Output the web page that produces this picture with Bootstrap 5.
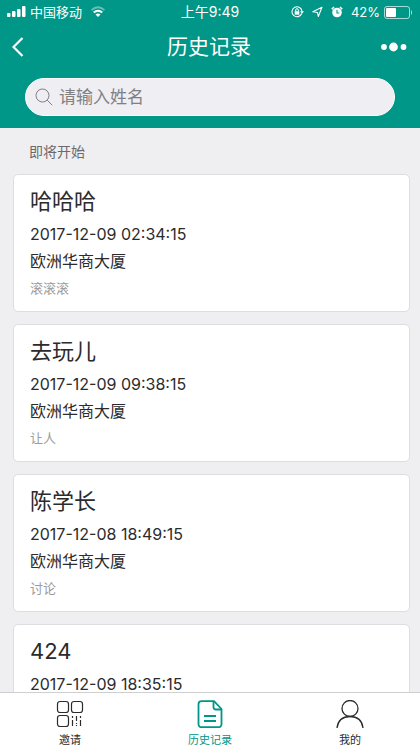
<!DOCTYPE html>
<html lang="zh-CN">
<head>
<meta charset="utf-8">
<meta name="viewport" content="width=device-width, initial-scale=1">
<title>历史记录</title>
<link href="https://cdn.jsdelivr.net/npm/bootstrap@5.3.0/dist/css/bootstrap.min.css" rel="stylesheet">
<style>
  body { font-family: Inter, "Noto Sans CJK SC", sans-serif; background: #efeef1; color: #2b2b2d; }
  svg { display: block; flex: none; fill: none; stroke: currentColor; }
  .app-top { background: #009688; color: #fff; }
  .status { height: 24px; font-size: 14px; line-height: 24px; padding: 0 7px; }
  .status-side { flex: 1 1 0; }
  .carrier, .charge { font-size: 13px; }
  .title-bar { height: 46px; padding: 0 12px; }
  .title-bar h1 { font-size: 21px; line-height: 30px; font-weight: 400; }
  .icon-btn { color: inherit; background: none; border: 0; padding: 0; }
  .search-wrap { padding: 8px 25px 12px; }
  .search-box { height: 38px; background: #efeef3; border: 1px solid #fff; color: #808083; padding: 0 9px; gap: 6px; }
  .search-box input, .search-box input:focus { font-size: 17px; line-height: 24px; color: #444; }
  .search-box input::placeholder { color: #808083; opacity: 1; }
  .list-label { font-size: 14px; line-height: 20px; color: #6b6b6e; padding: 14px 16px 12px; }
  .list-area { min-height: 0; padding: 0 10px 0 13px; }
  .record { flex: none; border: 1px solid #dedee2; border-radius: 5px; margin-bottom: 12px; padding: 12px 16px 9px; color: inherit; }
  .record h2 { font-size: 22px; line-height: 28px; font-weight: 400; margin-bottom: 6px; }
  .record p { font-size: 16px; line-height: 27px; }
  .record .note { font-size: 13px; color: #9b9b9d; }
  .tabs { border-top: 1px solid #cfcfd2; background: #fff; }
  .tab-link { color: #2b2b2d; font-size: 11px; line-height: 16px; padding: 7px 0 0; height: 54px; gap: 4px; }
  .tab-link.active { color: #009688; }
</style>
<script src="https://cdn.jsdelivr.net/npm/bootstrap@5.3.0/dist/js/bootstrap.bundle.min.js"></script>
</head>
<body class="d-flex flex-column vh-100 overflow-hidden">
<header class="app-top">
  <div class="status d-flex align-items-center">
    <div class="status-side d-flex align-items-center gap-1">
      <svg width="19" height="12" viewBox="0 0 19 12"><g fill="currentColor" stroke="none"><rect x="0" y="7" width="3.500" height="4" rx="1"/><rect x="5" y="5" width="3.500" height="6" rx="1"/><rect x="10" y="3" width="3.500" height="8" rx="1"/><rect x="15" y="0" width="3.500" height="11" rx="1"/></g></svg>
      <span class="carrier">中国移动</span>
      <svg class="ms-1" width="16" height="12" viewBox="0 0 16 12"><path d="M1.5 4.2Q8-1.6 14.500 4.200" stroke-width="1.800" opacity=".4"/><path d="M3.700 6.600Q8 2.900 12.300 6.600" stroke-width="2"/><path d="M5.500 8.600Q8 6.600 10.500 8.600L8 11Z" fill="currentColor" stroke="none"/></svg>
    </div>
    <span>上午9:49</span>
    <div class="status-side d-flex align-items-center justify-content-end">
      <svg class="me-2" width="13" height="12" viewBox="0 0 13 12"><path d="M10.700 7.500A5 5 0 1 1 11 5.500" stroke-width="1.100"/><path d="M9 5.200h4l-2 2.500z" fill="currentColor" stroke="none"/><rect x="3.700" y="5.200" width="4.600" height="3.500" fill="currentColor" stroke="none"/><path d="M4.700 5.200V4a1.300 1.300 0 0 1 2.600 0v1.200"/></svg>
      <svg class="me-2" width="11" height="12" viewBox="0 0 11 12"><path d="M.8 5.800 10 1.200 6.300 10.500 5.500 6.500Z" stroke-width="1.100" stroke-linejoin="round"/></svg>
      <svg class="me-2" width="12" height="12" viewBox="0 0 12 12"><circle cx="6" cy="6.500" r="4.800" fill="currentColor" stroke="none"/><path d="M.8 3.200 3 1M9 1l2.200 2.200" stroke-width="1.600"/><path d="M6 3.700V7h2.300" stroke="#009688" stroke-width="1.100"/></svg>
      <span class="charge">42%</span>
      <svg class="ms-1" width="29" height="13" viewBox="0 0 29 13"><rect x=".5" y=".5" width="25" height="12" rx="2.500" opacity=".65"/><rect x="2" y="2" width="10" height="9" rx="1" fill="currentColor" stroke="none"/><path d="M27.500 4.500v4" opacity=".6"/></svg>
    </div>
  </div>
  <div class="title-bar d-flex align-items-center justify-content-between">
    <button type="button" class="icon-btn" aria-label="返回"><svg width="26" height="20" viewBox="0 0 26 20"><path d="M10.500 1 1.500 10l9 9" stroke-width="2.200"/></svg></button>
    <h1 class="m-0">历史记录</h1>
    <button type="button" class="icon-btn" aria-label="更多"><svg width="28" height="10" viewBox="0 0 28 10"><g fill="currentColor" stroke="none"><circle cx="4" cy="5" r="2.900"/><circle cx="13.500" cy="5" r="4.400"/><circle cx="23.500" cy="5" r="2.900"/></g></svg></button>
  </div>
  <form class="search-wrap">
    <label class="search-box d-flex align-items-center rounded-pill">
      <svg width="18" height="18" viewBox="0 0 18 18"><circle cx="7.500" cy="7.500" r="6.500"/><path d="m12.200 12.200 5 5"/></svg>
      <input type="text" class="form-control border-0 bg-transparent shadow-none p-0" placeholder="请输入姓名" aria-label="请输入姓名">
    </label>
  </form>
</header>
<main class="list-area flex-fill overflow-hidden d-flex flex-column">
  <div class="list-label">即将开始</div>
  <article class="card record"><h2>哈哈哈</h2><p class="m-0">2017-12-09 02:34:15</p><p class="m-0">欧洲华商大厦</p><p class="note m-0">滚滚滚</p></article>
  <article class="card record"><h2>去玩儿</h2><p class="m-0">2017-12-09 09:38:15</p><p class="m-0">欧洲华商大厦</p><p class="note m-0">让人</p></article>
  <article class="card record"><h2>陈学长</h2><p class="m-0">2017-12-08 18:49:15</p><p class="m-0">欧洲华商大厦</p><p class="note m-0">讨论</p></article>
  <article class="card record"><h2>424</h2><p class="m-0">2017-12-09 18:35:15</p></article>
</main>
<nav class="tabs nav nav-fill flex-nowrap" aria-label="主导航">
  <a href="#" class="nav-item tab-link text-decoration-none d-flex flex-column align-items-center w-100"><svg width="28" height="28" viewBox="0 0 28 28" stroke-width="1.200"><rect x="1.500" y="1.500" width="11" height="11" rx="2.500"/><rect x="15.500" y="1.500" width="11" height="11" rx="2.500"/><rect x="1.500" y="15.500" width="11" height="11" rx="2.500"/><path d="M16.500 16v2m0 2v6m4-10v5m0 2v1m0 1v1m4-10v2m0 2v6" stroke-width="1.200"/></svg>邀请</a>
  <a href="#" class="nav-item tab-link active text-decoration-none d-flex flex-column align-items-center w-100" aria-current="page"><svg width="28" height="28" viewBox="0 0 28 28" stroke-width="1.800" stroke-linejoin="round"><path d="M18 1.200H5.500a3 3 0 0 0-3 3v20a3 3 0 0 0 3 3h17a3 3 0 0 0 3-3V9Z"/><path d="M17.500 1.500V7q0 2.500 2.500 2.500h5.500M8 16h12M8 21h12"/></svg>历史记录</a>
  <a href="#" class="nav-item tab-link text-decoration-none d-flex flex-column align-items-center w-100"><svg width="28" height="28" viewBox="0 0 28 28" stroke-width="1.300"><circle cx="14" cy="8.500" r="8"/><path d="M1 28C2 20 7.500 16.500 14 16.500S26 20 27 28"/></svg>我的</a>
</nav>
</body>
</html>
